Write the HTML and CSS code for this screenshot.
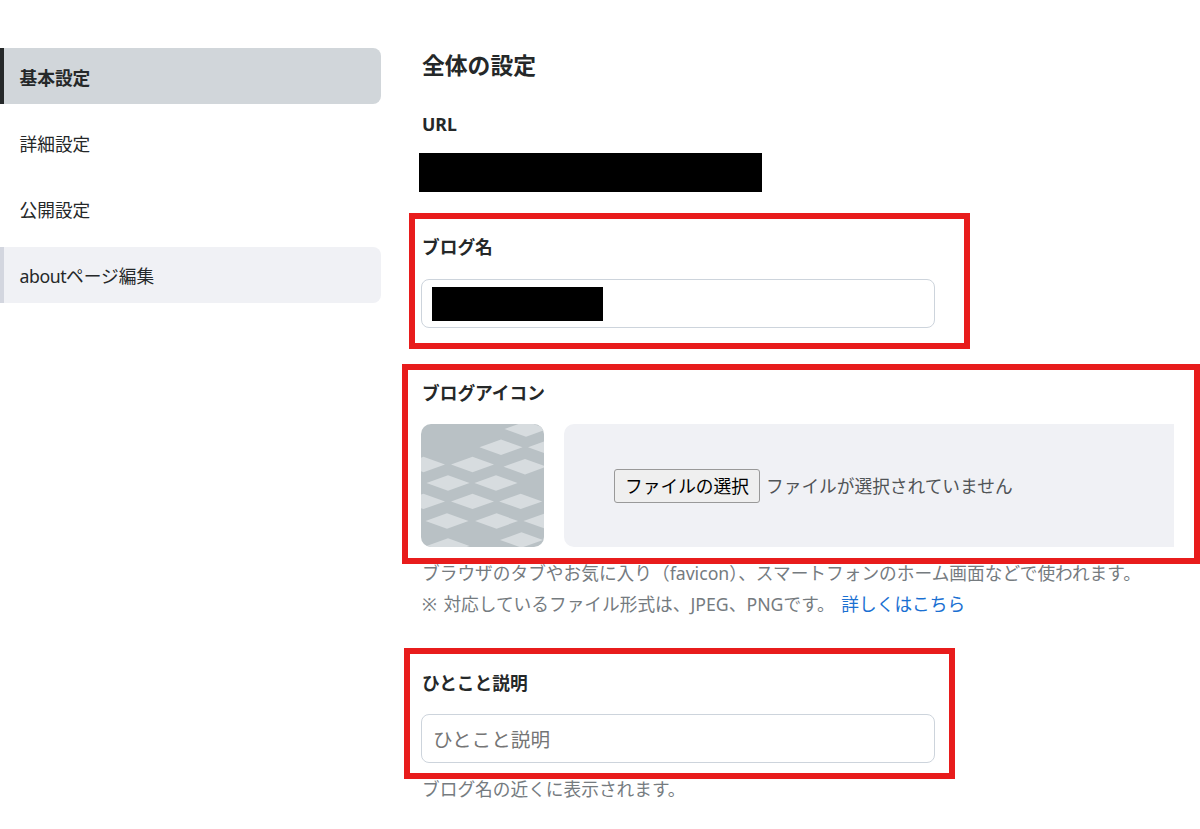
FILE: index.html
```html
<!DOCTYPE html>
<html lang="ja">
<head>
    <meta charset="UTF-8">
    <meta name="viewport" content="width=device-width, initial-scale=1.0">
    <title>基本設定</title>
    <link rel="stylesheet" href="styles.css">
</head>
<body>
    <div class="page">
        <nav class="sidebar">
            <a class="menu-item active">基本設定</a>
            <a class="menu-item">詳細設定</a>
            <a class="menu-item">公開設定</a>
            <a class="menu-item hover"><span class="latin">about</span>ページ編集</a>
        </nav>
        <main class="settings">
            <h1 class="heading">全体の設定</h1>
            <section class="field field-url">
                <h2 class="label">URL</h2>
                <div class="mask mask-url"></div>
            </section>
            <section class="field field-name">
                <h2 class="label">ブログ名</h2>
                <div class="text-box"><div class="mask mask-name"></div></div>
            </section>
            <section class="field field-icon">
                <h2 class="label">ブログアイコン</h2>
                <div class="icon-row">
                    <svg class="blog-icon" viewBox="0 0 123 123">
                        <defs>
                            <path id="tile" d="M-21.5 0L0 -7.7L21.5 0L0 7.7Z"/>
                        </defs>
                        <rect width="123" height="123" fill="#b9c1c5"/>
                        <g fill="#d7dcdf">
                            <use href="#tile" x="105" y="5"/>
                            <use href="#tile" x="80" y="23.3"/>
                            <use href="#tile" x="128.5" y="23.3"/>
                            <use href="#tile" x="2.5" y="40.5"/>
                            <use href="#tile" x="51.5" y="40.5"/>
                            <use href="#tile" x="104" y="42.7"/>
                            <use href="#tile" x="27" y="59"/>
                            <use href="#tile" x="75" y="59"/>
                            <use href="#tile" x="2.5" y="77.4"/>
                            <use href="#tile" x="51.5" y="77.4"/>
                            <use href="#tile" x="99.7" y="77.4"/>
                            <use href="#tile" x="26" y="97"/>
                            <use href="#tile" x="75.6" y="97"/>
                            <use href="#tile" x="124" y="97"/>
                            <use href="#tile" x="27" y="122"/>
                            <use href="#tile" x="100.5" y="116"/>
                        </g>
                    </svg>
                    <div class="upload">
                        <button type="button" class="file-button">ファイルの選択</button>
                        <span class="file-status">ファイルが選択されていません</span>
                    </div>
                </div>
                <p class="help">ブラウザのタブやお気に入り（favicon）、スマートフォンのホーム画面などで使われます。</p>
                <p class="help note">※ 対応しているファイル形式は、JPEG、PNGです。 <a class="link">詳しくはこちら</a></p>
            </section>
            <section class="field field-description">
                <h2 class="label">ひとこと説明</h2>
                <input type="text" class="text-box" placeholder="ひとこと説明">
                <p class="help">ブログ名の近くに表示されます。</p>
            </section>
        </main>
    </div>
</body>
</html>
```
FILE: styles.css
```css
*,
*::after {
    box-sizing: border-box;
}

body {
    margin: 0;
    overflow: hidden;
    font-family: "Noto Sans", "Noto Sans CJK JP", sans-serif;
    font-size: 17.7px;
    line-height: 30px;
    color: #252829;
    background-color: #fff;
}

.page {
    display: flex;
    gap: 40px;
    padding-top: 48px;
}

.sidebar {
    display: flex;
    flex-direction: column;
    gap: 10.2px;
    width: 381px;
    flex-shrink: 0;
}

.menu-item {
    height: 56px;
    padding: 14.6px 15.5px 0;
    border-left: 4px solid transparent;
    border-radius: 0 8px 8px 0;
}

.menu-item.active {
    font-weight: bold;
    background-color: #d1d6da;
    border-left-color: #252829;
}

.menu-item.hover {
    background-color: #f0f1f5;
    border-left-color: #d3d6df;
}

.latin {
    letter-spacing: -0.45px;
}

.settings {
    flex: 1;
    min-width: 0;
}

.heading {
    margin: 0;
    padding-left: 1px;
    font-size: 22.8px;
    line-height: 36px;
}

.field {
    position: relative;
}

.field-url {
    margin-top: 25px;
}

.field-name {
    margin-top: 40.5px;
}

.field-icon {
    margin-top: 50px;
}

.field-description {
    margin-top: 49px;
}

.label {
    margin: 0;
    padding-left: 1px;
    font-size: 17.7px;
    line-height: 30px;
}

.mask {
    background-color: #000;
}

.mask-url {
    width: 343px;
    height: 38.5px;
    margin: 14px 0 0 -2px;
}

.mask-name {
    width: 171px;
    height: 34px;
}

.text-box {
    display: block;
    width: 514px;
    height: 49px;
    margin-top: 17px;
    padding: 7px 10px;
    border: 1px solid #cdd4dc;
    border-radius: 8px;
    font-family: inherit;
    font-size: 19.6px;
    background-color: #fff;
}

.text-box::placeholder {
    color: #757575;
}

.icon-row {
    display: flex;
    gap: 20px;
    margin-top: 16px;
}

.blog-icon {
    width: 123px;
    height: 123px;
    border-radius: 10px;
}

.upload {
    display: flex;
    align-items: center;
    gap: 6px;
    width: 610px;
    height: 123px;
    padding-left: 50px;
    border-radius: 10px 0 0 10px;
    background-color: #f0f1f5;
}

.file-button {
    width: 146px;
    height: 34px;
    padding: 0 0 1px;
    border: 1px solid #999;
    border-radius: 3px;
    font-family: inherit;
    font-size: 17.7px;
    color: #000;
    background-color: #efefef;
}

.file-status {
    color: #505457;
}

.help {
    margin: 11px 0 0;
    padding-left: 1px;
    color: #757b7f;
    white-space: nowrap;
}

.help.note {
    margin-top: 1px;
    margin-bottom: 49px;
    word-spacing: 2px;
}

.link {
    color: #1a70d2;
}

/* red frames laid over the fields */
.field-name::after,
.field-icon::after,
.field-description::after {
    content: "";
    position: absolute;
    border: 6px solid #e81c1c;
    pointer-events: none;
}

.field-name::after {
    left: -12px;
    top: -19px;
    width: 561px;
    height: 136px;
}

.field-icon::after {
    left: -19px;
    top: -14px;
    width: 798px;
    height: 200px;
}

.field-description::after {
    left: -17px;
    top: -20px;
    width: 551px;
    height: 131px;
}

.field-description .text-box {
    margin-top: 16px;
    padding: 2px 11px 0;
}

.field-description .help {
    margin-top: 11px;
}
```
